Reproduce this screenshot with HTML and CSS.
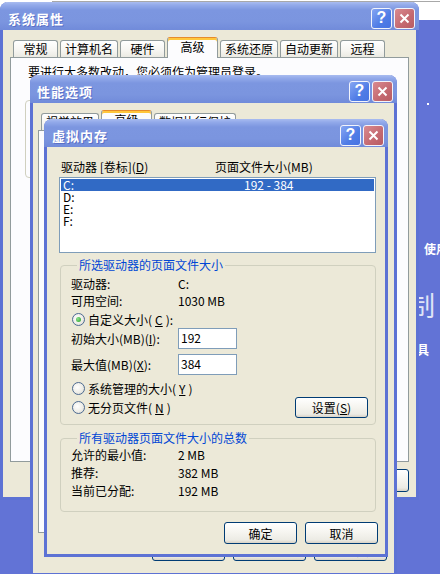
FILE: index.html
```html
<!DOCTYPE html>
<html>
  <head>
    <meta charset="utf-8" />
    <title>虚拟内存</title>
    <link rel="stylesheet" href="styles.css">
  </head>
  <body>
    <div class="desktop">
      <div class="backwin"></div>
      <span class="dot"></span>
      <div class="desk-text t-use">使用</div>
      <div class="desk-text t-ctrl">控制</div>
      <div class="desk-text t-tool">工具</div>

      <!-- 系统属性 -->
      <div class="window win-sys">
        <div class="titlebar">
          <span class="title">系统属性</span>
          <span class="ctl help">?</span>
          <span class="ctl close"><svg width="11" height="11" viewBox="0 0 11 11"><path d="M1.5 1.5L9.5 9.5M9.5 1.5L1.5 9.5" stroke="#fff" stroke-width="2" /></svg></span>
        </div>
        <div class="body">
          <div class="tabs">
            <span class="tab">常规</span>
            <span class="tab">计算机名</span>
            <span class="tab">硬件</span>
            <span class="tab on">高级</span>
            <span class="tab">系统还原</span>
            <span class="tab">自动更新</span>
            <span class="tab">远程</span>
          </div>
          <div class="page sys-page">
            <p class="note">要进行大多数改动，您必须作为管理员登录。</p>
            <div class="sys-group"></div>
          </div>
          <div class="buttons sys-buttons">
            <button class="btn">确定</button>
            <button class="btn">取消</button>
            <button class="btn">应用(<u>A</u>)</button>
          </div>
        </div>
      </div>

      <!-- 性能选项 -->
      <div class="window win-perf">
        <div class="titlebar">
          <span class="title">性能选项</span>
          <span class="ctl help">?</span>
          <span class="ctl close"><svg width="11" height="11" viewBox="0 0 11 11"><path d="M1.5 1.5L9.5 9.5M9.5 1.5L1.5 9.5" stroke="#fff" stroke-width="2" /></svg></span>
        </div>
        <div class="body perf-body">
          <div class="tabs">
            <span class="tab">视觉效果</span>
            <span class="tab on">高级</span>
            <span class="tab">数据执行保护</span>
          </div>
          <div class="page perf-page"></div>
          <div class="buttons perf-buttons">
            <button class="btn">确定</button>
            <button class="btn">取消</button>
            <button class="btn">应用(<u>A</u>)</button>
          </div>
        </div>
      </div>

      <!-- 虚拟内存 -->
      <div class="window win-vm">
        <div class="titlebar">
          <span class="title">虚拟内存</span>
          <span class="ctl help">?</span>
          <span class="ctl close"><svg width="11" height="11" viewBox="0 0 11 11"><path d="M1.5 1.5L9.5 9.5M9.5 1.5L1.5 9.5" stroke="#fff" stroke-width="2" /></svg></span>
        </div>
        <div class="body vm-body">
          <div class="vm-head">
            <span class="col-drive">驱动器 [卷标](<u>D</u>)</span>
            <span>页面文件大小(MB)</span>
          </div>
          <div class="listbox">
            <div class="row sel"><span class="col-name">C:</span><span>192 - 384</span></div>
            <div class="row"><span class="col-name">D:</span></div>
            <div class="row"><span class="col-name">E:</span></div>
            <div class="row"><span class="col-name">F:</span></div>
          </div>

          <fieldset class="group group-drive">
            <legend>所选驱动器的页面文件大小</legend>
            <div class="info first"><span class="label">驱动器:</span><span>C:</span></div>
            <div class="info"><span class="label">可用空间:</span><span>1030 MB</span></div>
            <div class="opt opt-custom"><span class="radio on"></span>自定义大小(<u>C</u>):</div>
            <div class="field"><span class="label">初始大小(MB)(<u>I</u>):</span><span class="input">192</span></div>
            <div class="field field-max"><span class="label">最大值(MB)(<u>X</u>):</span><span class="input">384</span></div>
            <div class="opt opt-system"><span class="radio"></span>系统管理的大小(<u>Y</u>)</div>
            <div class="last-row">
              <div class="opt"><span class="radio"></span>无分页文件(<u>N</u>)</div>
              <button class="btn">设置(<u>S</u>)</button>
            </div>
          </fieldset>

          <fieldset class="group group-total">
            <legend>所有驱动器页面文件大小的总数</legend>
            <div class="total first"><span class="label">允许的最小值:</span><span>2 MB</span></div>
            <div class="total"><span class="label">推荐:</span><span>382 MB</span></div>
            <div class="total"><span class="label">当前已分配:</span><span>192 MB</span></div>
          </fieldset>

          <div class="buttons vm-buttons">
            <button class="btn">确定</button>
            <button class="btn">取消</button>
          </div>
        </div>
      </div>
    </div>
  </body>
</html>
```

FILE: styles.css
```css
* {
  box-sizing: border-box;
}
html,
body {
  margin: 0;
  height: 100%;
}
body {
  background: #6273d6;
  font-family: "Noto Sans CJK SC", sans-serif;
  font-size: 12px;
  color: #000;
  overflow: hidden;
}
u {
  text-decoration: underline;
}
.desktop {
  position: relative;
  width: 440px;
  height: 574px;
  overflow: hidden;
}

/* things behind the windows */
.backwin {
  position: absolute;
  left: 0;
  top: 0;
  width: 440px;
  height: 20px;
  background: #fff;
}
.backwin::before {
  content: "";
  position: absolute;
  left: 52px;
  right: 0;
  top: 1px;
  height: 1px;
  background: #a8a8a8;
}
.dot {
  position: absolute;
  left: 427px;
  top: 103px;
  width: 2px;
  height: 2px;
  background: #fff;
}
.desk-text {
  position: absolute;
  color: #fff;
  font-weight: bold;
  line-height: 14px;
  white-space: nowrap;
}
.t-use {
  left: 424px;
  top: 242px;
}
.t-ctrl {
  left: 381px;
  top: 290px;
  font-size: 27px;
  line-height: 30px;
  font-weight: normal;
  color: #dfe3f6;
}
.t-tool {
  left: 405px;
  top: 343px;
}

/* window frame */
.window {
  position: absolute;
  z-index: 1;
  display: flex;
  flex-direction: column;
  background: #ece9d8;
  border: 3px solid #5d72d4;
  border-top: 0;
  border-radius: 8px 8px 0 0;
}
.win-sys {
  left: 0;
  top: 2px;
  width: 419px;
  height: 498px;
}
.win-perf {
  left: 30px;
  top: 75px;
  width: 367px;
  height: 501px;
}
.win-vm {
  left: 44px;
  top: 119px;
  width: 344px;
  height: 438px;
}
.titlebar {
  height: 28px;
  margin: 0 -3px;
  padding: 4px 4px 0 8px;
  display: flex;
  align-items: center;
  gap: 2px;
  border-radius: 8px 8px 0 0;
  background: linear-gradient(
    #a9bcf0 0,
    #93aaea 3px,
    #7c96e0 8px,
    #7b95df 70%,
    #718bda 100%
  );
}
.win-perf .titlebar {
  padding-left: 7px;
}
.title {
  flex: 1;
  color: #fff;
  font-weight: bold;
  font-size: 13px;
  letter-spacing: 1px;
  text-shadow: 1px 1px 0 #5a70c8;
}
.ctl {
  width: 21px;
  height: 21px;
  border: 1px solid #f2f4fc;
  border-radius: 3px;
  display: flex;
  align-items: center;
  justify-content: center;
}
.help {
  background: linear-gradient(135deg, #86a6f2, #4f7ce6 60%, #4773e2);
  color: #fff;
  font-family: "Liberation Sans", sans-serif;
  font-weight: bold;
  font-size: 16px;
}
.close {
  background: linear-gradient(135deg, #d98a90, #c46970 60%, #b85c63);
}

.body {
  flex: 1;
  display: flex;
  flex-direction: column;
  padding: 7px 7px 0;
}

/* tabs */
.tabs {
  display: flex;
  align-items: flex-end;
  gap: 2px;
  height: 21px;
  padding-left: 3px;
  margin-bottom: -1px;
  position: relative;
  z-index: 1;
}
.tab {
  height: 17px;
  min-width: 45px;
  margin-bottom: 1px;
  padding: 0 4px;
  text-align: center;
  line-height: 15px;
  border: 1px solid #919b9c;
  border-bottom: 0;
  border-radius: 3px 3px 0 0;
  background: linear-gradient(#fff, #f6f5f1 60%, #ebeae3);
}
.tab.on {
  height: 21px;
  min-width: 51px;
  margin-bottom: 0;
  line-height: 15px;
  padding-top: 1px;
  border-top: 1px solid #e68b2c;
  box-shadow: inset 0 2px 0 #ffc73c;
  background: #fcfcfe;
}
.page {
  border: 1px solid #919b9c;
  background: #fcfcfe;
}
.sys-page {
  height: 405px;
  padding: 6px 14px 0;
}
.note {
  margin: 0 0 0 3px;
  line-height: 15px;
  white-space: nowrap;
}
.sys-group {
  margin-top: 21px;
  height: 78px;
  border: 1px solid #d0d0bf;
  border-radius: 4px;
}
.perf-body {
  padding: 7px 6px 0 5px;
}
.perf-page {
  height: 403px;
}

/* buttons */
.buttons {
  display: flex;
  justify-content: flex-end;
}
.btn {
  width: 73px;
  height: 22px;
  padding: 0;
  font: inherit;
  color: #000;
  border: 1px solid #003c74;
  border-radius: 3px;
  background: linear-gradient(#fff, #f6f5f0 45%, #ecebe4 85%, #d8d2c6);
  display: flex;
  align-items: center;
  justify-content: center;
}
.sys-buttons {
  margin-top: 7px;
  gap: 6px;
}
.sys-buttons .btn {
  width: 75px;
  height: 23px;
}
.perf-buttons {
  margin: 5px 1px 0 0;
  gap: 8px;
}
.perf-buttons .btn {
  height: 23px;
}

/* virtual memory dialog */
.vm-body {
  padding: 13px 7px 10px 12px;
}
.vm-head {
  display: flex;
  line-height: 14px;
  padding-left: 2px;
  white-space: nowrap;
}
.col-drive {
  width: 154px;
}
.listbox {
  margin: 3px 2px 0 0;
  height: 76px;
  padding: 1px;
  border: 1px solid #7f9db9;
  background: #fff;
}
.row {
  display: flex;
  height: 12px;
  line-height: 12px;
  padding-left: 2px;
}
.row.sel {
  background: #316ac5;
  color: #fff;
}
.col-name {
  width: 181px;
}
.group {
  margin: 5px 2px 0 1px;
  min-width: 0;
  border: 1px solid #d0d0bf;
  border-radius: 4px;
  padding: 0 7px 6px 10px;
}
.group legend {
  color: #0046d5;
  padding: 0 2px;
  margin-left: 6px;
  line-height: 14px;
}
.label {
  width: 107px;
  flex: none;
}
.info {
  display: flex;
  line-height: 17px;
}
.info.first {
  margin-top: 3px;
}
.opt {
  display: flex;
  align-items: center;
  gap: 3px;
  height: 18px;
  padding-left: 1px;
}
.opt-custom {
  margin-top: 1px;
}
.opt-system {
  margin-top: 4px;
}
.radio {
  width: 13px;
  height: 13px;
  border-radius: 50%;
  border: 1px solid #4c6a92;
  background: radial-gradient(circle at 40% 40%, #fff 0, #eeede7 55%, #d6d3c8 100%);
  position: relative;
  flex: none;
}
.radio.on::after {
  content: "";
  position: absolute;
  left: 3px;
  top: 3px;
  width: 5px;
  height: 5px;
  border-radius: 50%;
  background: radial-gradient(circle at 35% 35%, #8fe08f, #21a121);
}
.field {
  display: flex;
  align-items: center;
  height: 21px;
}
.field-max {
  margin-top: 5px;
}
.input {
  width: 59px;
  height: 21px;
  border: 1px solid #7f9db9;
  background: #fff;
  padding: 0 2px;
  line-height: 17px;
}
.last-row {
  display: flex;
  align-items: center;
  justify-content: space-between;
  height: 21px;
}
.last-row .btn {
  height: 21px;
}
.group-total {
  margin-top: 6px;
  padding-bottom: 11px;
}
.total {
  display: flex;
  line-height: 18px;
}
.total.first {
  margin-top: 1px;
}
.vm-buttons {
  margin-top: 10px;
  gap: 8px;
}
```
